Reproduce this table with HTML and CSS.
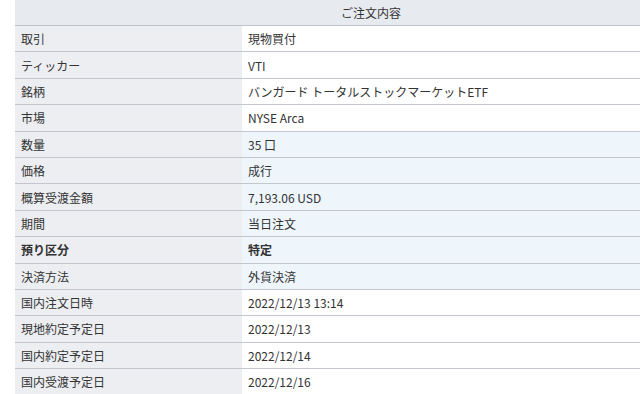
FILE: index.html
```html
<!DOCTYPE html>
<html lang="ja">
<head>
<meta charset="utf-8">
<link rel="stylesheet" href="styles.css">
</head>
<body>
<div class="order">
  <div class="head">ご注文内容</div>
  <div class="row"><div class="label">取引</div><div class="value">現物買付</div></div>
  <div class="row"><div class="label">ティッカー</div><div class="value">VTI</div></div>
  <div class="row"><div class="label">銘柄</div><div class="value">バンガード トータルストックマーケットETF</div></div>
  <div class="row"><div class="label">市場</div><div class="value">NYSE Arca</div></div>
  <div class="row input"><div class="label">数量</div><div class="value">35 口</div></div>
  <div class="row input"><div class="label">価格</div><div class="value">成行</div></div>
  <div class="row input"><div class="label">概算受渡金額</div><div class="value">7,193.06 USD</div></div>
  <div class="row input"><div class="label">期間</div><div class="value">当日注文</div></div>
  <div class="row input strong"><div class="label">預り区分</div><div class="value">特定</div></div>
  <div class="row input"><div class="label">決済方法</div><div class="value">外貨決済</div></div>
  <div class="row"><div class="label">国内注文日時</div><div class="value">2022/12/13 13:14</div></div>
  <div class="row"><div class="label">現地約定予定日</div><div class="value">2022/12/13</div></div>
  <div class="row"><div class="label">国内約定予定日</div><div class="value">2022/12/14</div></div>
  <div class="row"><div class="label">国内受渡予定日</div><div class="value">2022/12/16</div></div>
</div>
</body>
</html>
```

FILE: styles.css
```css
html, body {
  margin: 0;
  padding: 0;
  background: #ffffff;
  overflow: hidden;
}

body {
  width: 640px;
  height: 394px;
  font-family: "Noto Sans CJK JP", "Noto Sans", sans-serif;
  font-size: 12px;
  color: #333333;
}

.order {
  margin-left: 15px;
  display: flex;
  flex-direction: column;
}

.head {
  box-sizing: border-box;
  height: 26px;
  padding-left: 87px;
  background: #e7eaef;
  border-bottom: 1px solid #bfc3ca;
  display: flex;
  align-items: center;
  justify-content: center;
}

.row {
  box-sizing: border-box;
  height: 26.4px;
  border-bottom: 1px solid #c3c6cc;
  display: grid;
  grid-template-columns: 227px 1fr;
}

.label {
  background: #eceef2;
  padding-left: 6px;
  display: flex;
  align-items: center;
}

.value {
  background: #ffffff;
  padding-left: 6px;
  display: flex;
  align-items: center;
}

.input .value {
  background: #eef6fc;
}

.strong .label,
.strong .value {
  font-weight: bold;
}
```
